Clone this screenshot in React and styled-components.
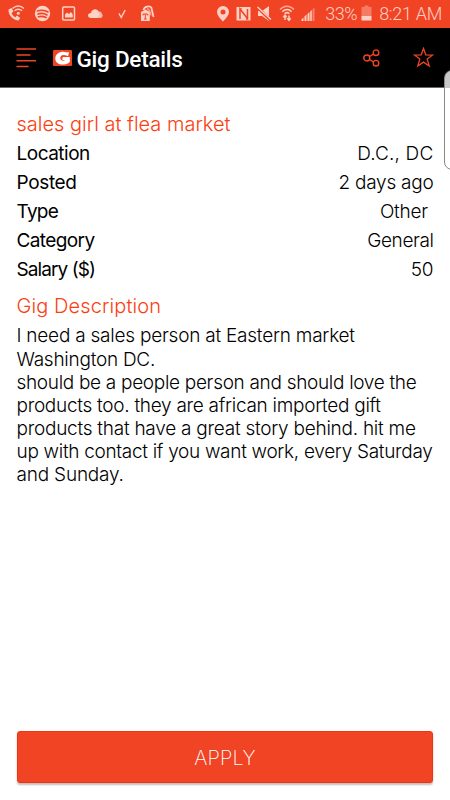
import React from 'react';
import styled, { createGlobalStyle } from 'styled-components';

const GlobalStyle = createGlobalStyle`
  body {
    margin: 0;
    background: #fff;
    overflow: hidden;
  }
`;

const Screen = styled.div`
  position: relative;
  display: flex;
  flex-direction: column;
  width: 450px;
  height: 800px;
  overflow: hidden;
  background: #fff;
  color: #000;
  font-family: Inter, 'Liberation Sans', sans-serif;
  font-weight: 300;
`;

const StatusBar = styled.div`
  display: flex;
  justify-content: space-between;
  flex: none;
  height: 28px;
  background: #f04424;
  color: #ffd0c4;
`;

const Icon = styled.svg`
  display: block;
  flex: none;
`;

const Status = styled.div`
  display: flex;
  align-items: center;
  padding-right: 8px;
  font-family: Roboto, sans-serif;
  font-size: 18px;
  font-weight: 300;
  line-height: 30px;
  white-space: nowrap;
`;

const Percent = styled.span`
  width: 36px;
  margin-left: -1px;
  letter-spacing: -0.5px;
`;

const Clock = styled.span`
  letter-spacing: -0.3px;
`;

const AppBar = styled.header`
  display: flex;
  align-items: center;
  flex: none;
  height: 59px;
  padding: 0 16px;
  background: #000;
  border-bottom: 1px solid #666;
`;

const Logo = styled(Icon)`
  margin-left: 17px;
`;

const Heading = styled.h1`
  flex: 1;
  margin: 2px 0 0 3.5px;
  color: #fff;
  font-family: Roboto, sans-serif;
  font-size: 22.5px;
  font-weight: 500;
  letter-spacing: -0.25px;
`;

const Actions = styled.div`
  display: flex;
  align-items: center;
  gap: 33px;
`;

const Content = styled.main`
  flex: 1;
  padding: 21px 16.5px 0;
`;

const Title = styled.h2`
  margin: 0;
  color: #fb4010;
  font-size: 20px;
  font-weight: 300;
  line-height: 30px;
  letter-spacing: ${props => props.$spacing}px;
  white-space: nowrap;
`;

const Details = styled.div`
  margin-bottom: 7px;
`;

const Row = styled.div`
  display: flex;
  justify-content: space-between;
  height: 29.1px;
  font-size: 19px;
  line-height: 30px;
`;

const Label = styled.span`
  font-weight: 400;
  letter-spacing: ${props => props.$spacing}px;
`;

const Value = styled.span`
  letter-spacing: ${props => props.$spacing}px;
  margin-right: ${props => props.$inset || 0}px;
`;

const Description = styled.div`
  padding-top: 3px;
  font-size: 19px;
  line-height: 23.15px;
  white-space: nowrap;
`;

const Line = styled.div`
  letter-spacing: ${props => props.$spacing}px;
`;

const Apply = styled.button`
  flex: none;
  height: 52px;
  margin: 0 17px 17px;
  padding: 2px 0 0;
  border: 1px solid #f43210;
  border-radius: 3px;
  background: #f04424;
  box-shadow: 0 2px 2px rgba(0, 0, 0, 0.25);
  color: #fff;
  font-family: inherit;
  font-size: 20px;
  font-weight: 200;
  letter-spacing: 0.1px;
`;

// Edge panel handle floating over the right side of the screen
const EdgeHandle = styled.div`
  position: absolute;
  top: 70px;
  right: -10px;
  width: 16px;
  height: 100px;
  box-sizing: border-box;
  border: 1px solid #888;
  border-radius: 9px;
  background: linear-gradient(#c8c8c8 17px, #fff 17px);
`;

const details = [
  { label: 'Location', value: 'D.C., DC', labelSpacing: -0.5, spacing: 0.2 },
  { label: 'Posted', value: '2 days ago', labelSpacing: -0.35, spacing: -0.25 },
  { label: 'Type', value: 'Other', labelSpacing: -0.7, spacing: -0.2, inset: 5.5 },
  { label: 'Category', value: 'General', labelSpacing: -0.6, spacing: -0.4 },
  { label: 'Salary ($)', value: '50', labelSpacing: -0.9, spacing: -0.1 },
];

const description = [
  ['I need a sales person at Eastern market', -0.23],
  ['Washington DC.', -0.25],
  ['should be a people person and should love the', -0.31],
  ['products too. they are african imported gift', -0.28],
  ['products that have a great story behind. hit me', -0.25],
  ['up with contact if you want work, every Saturday', -0.3],
  ['and Sunday.', -0.2],
];

function Notifications() {
  return (
    <Icon width="165" height="28" viewBox="0 0 165 28" fill="currentColor">
      <path d="M8.500 9.500l3-1.500 2 3.500-2 1.500c.8 2 2 3.200 3.800 4.200l1.700-1.600 3.200 2.400-1.700 2.500C14.500 20.500 8 16 8.500 9.500z" />
      <g fill="none" stroke="currentColor" strokeWidth="1.400">
        <path d="M12.500 8.500c3.500-3 8-3 11.500 0M14.500 10.800c2.300-1.900 5.200-1.900 7.500 0" />
      </g>
      <circle cx="18.300" cy="13.300" r="1.500" />
      <circle cx="42.500" cy="13.500" r="7.700" />
      <g fill="none" stroke="#f04424" strokeWidth="1.700" strokeLinecap="round">
        <path d="M37.500 11c3.500-1.200 7.500-.8 10.500.9M38 14c3-.9 6.500-.5 9 .9M38.500 16.800c2.700-.7 5.200-.4 7.500.8" />
      </g>
      <rect x="62.700" y="7" width="11.800" height="13" rx="1" fill="none" stroke="currentColor" strokeWidth="1.500" />
      <path d="M65 17.500v-3l2-2 2 1.500 2-2 1.700 2.500v3z" />
      <path d="M91 18c-4 0-4-5 0-5 .5-4 6-5 7.500-1.500 2-.3 3 .7 3 2 1.800 1 1 4.500-1 4.500z" />
      <path d="M98.500 11.500c2-.3 3 .7 3 2 1.800 1 1 4.500-1 4.500h-4c3-1 3.500-4 2-6.500z" opacity=".5" fill="#d9a79b" />
      <path d="M119 13.500l2.200 4 4-7.500" fill="none" stroke="currentColor" strokeWidth="1.500" />
      <path d="M141 12l4.500-2.500L149.800 12v9H141z" />
      <path d="M143.500 10c.5-3.500 6.500-5 8-2l2 9" fill="none" stroke="currentColor" strokeWidth="1.800" />
      <path d="M147 8.500c2 .5 3.500 3.500 4 7" fill="none" stroke="currentColor" strokeWidth="1.500" opacity=".6" />
      <path d="M143 15.500V14h4.700v1.500M145.300 14v5M144 19h2.700" fill="none" stroke="#f04424" strokeWidth="1" />
    </Icon>
  );
}

function Signals() {
  return (
    <Icon width="114" height="28" viewBox="212 0 114 28" fill="currentColor">
      <path fillRule="evenodd" d="M223 6a6 6 0 0 0-6 6c0 4 6 9.500 6 9.500s6-5.500 6-9.500a6 6 0 0 0-6-6zm0 3.500a2.500 2.500 0 1 1 0 5 2.500 2.500 0 0 1 0-5z" />
      <path d="M236.500 7h14v13.500h-14z" />
      <path d="M240 19V9l7.500 9.500V9M240 9.500l1.500-1M247.500 18.500L246 19" fill="none" stroke="#f04424" strokeWidth="1.500" />
      <path d="M258 11h4l7-5v15l-7-5h-4z" />
      <path d="M257.500 7.500l13.500 13" stroke="#f04424" strokeWidth="3" />
      <path d="M257.500 7l13.500 12.500" stroke="currentColor" strokeWidth="1.500" />
      <g fill="none" stroke="currentColor" strokeWidth="1.500">
        <path d="M280 9.500c4-4.500 10-4.500 14 0" opacity=".7" />
        <path d="M282.300 11.700c2.800-3 6.600-3 9.400 0M284.600 13.800c1.500-1.500 3.300-1.500 4.800 0" />
        <path d="M285 20v-4.500M289 15.500V20M283.300 17.200l1.700-2 1.700 2M287.300 18.300l1.700 2 1.700-2" />
      </g>
      <path d="M301.500 21v-1.500l2-2V21zM304.500 21v-4.500l2-2V21zM307.500 21v-7l2-2V21z" />
      <path d="M310.200 21v-9.500l1.600-1.500v11z" />
      <path d="M312.500 21V9.500l2-2V21z" opacity=".45" />
    </Icon>
  );
}

function Battery() {
  return (
    <Icon width="18" height="28" viewBox="361 0 18 28" fill="currentColor">
      <path d="M361.500 7h3V5.500h4V7h3v9.500h-10z" opacity=".4" />
      <path d="M361.500 16h10v4.500h-10z" />
    </Icon>
  );
}

function App() {
  return (
    <>
      <GlobalStyle />
      <Screen>
        <StatusBar>
          <Notifications />
          <Status>
            <Signals />
            <Percent>33%</Percent>
            <Battery />
            <Clock>8:21 AM</Clock>
          </Status>
        </StatusBar>
        <AppBar>
          <Icon width="20" height="20" viewBox="0 0 20 20" stroke="#f04424" strokeWidth="1.500">
            <path d="M.5 1H20M.5 7h14M.5 12.700H20M.5 18.500h12" />
          </Icon>
          <Logo width="20" height="16" viewBox="0 0 20 16">
            <rect width="19" height="16" rx="1" fill="#f04424" />
            <path d="M16 2l-.8 4-3.200-.7C9.500 4.500 7.300 5.800 7.300 8c0 2.500 3 3.500 4.700 2H9.200l.6-3h7v5C11.500 16.500 2.300 15 2.300 8.500 2.300 2.500 9.500.5 13.800 2.600z" fill="#fff" />
          </Logo>
          <Heading>Gig Details</Heading>
          <Actions>
            <Icon width="17" height="18" viewBox="0 0 17 18" fill="none" stroke="#f04424" strokeWidth="1.400">
              <circle cx="3.800" cy="9" r="3" />
              <circle cx="13" cy="3.700" r="2.800" />
              <circle cx="13" cy="14.200" r="2.800" />
              <path d="M6.400 7.500l4.200-2.400M6.400 10.500l4.200 2.300" />
            </Icon>
            <Icon width="21" height="21" viewBox="0 0 21 21" fill="none" stroke="#f04424" strokeWidth="1.300">
              <path d="M10.500 1.500l2.300 6.300 6.900.2-5.500 4.100 2 6.900-5.700-3.900L4.800 19l2-6.900L1.300 8l6.900-.2z" />
            </Icon>
          </Actions>
        </AppBar>
        <Content>
          <Title $spacing={0}>sales girl at flea market</Title>
          <Details>
            {details.map(item => (
              <Row key={item.label}>
                <Label $spacing={item.labelSpacing}>{item.label}</Label>
                <Value $spacing={item.spacing} $inset={item.inset}>{item.value}</Value>
              </Row>
            ))}
          </Details>
          <Title $spacing={0.1}>Gig Description</Title>
          <Description>
            {description.map(([text, spacing]) => (
              <Line key={text} $spacing={spacing}>{text}</Line>
            ))}
          </Description>
        </Content>
        <Apply>APPLY</Apply>
        <EdgeHandle />
      </Screen>
    </>
  );
}

export default App;
